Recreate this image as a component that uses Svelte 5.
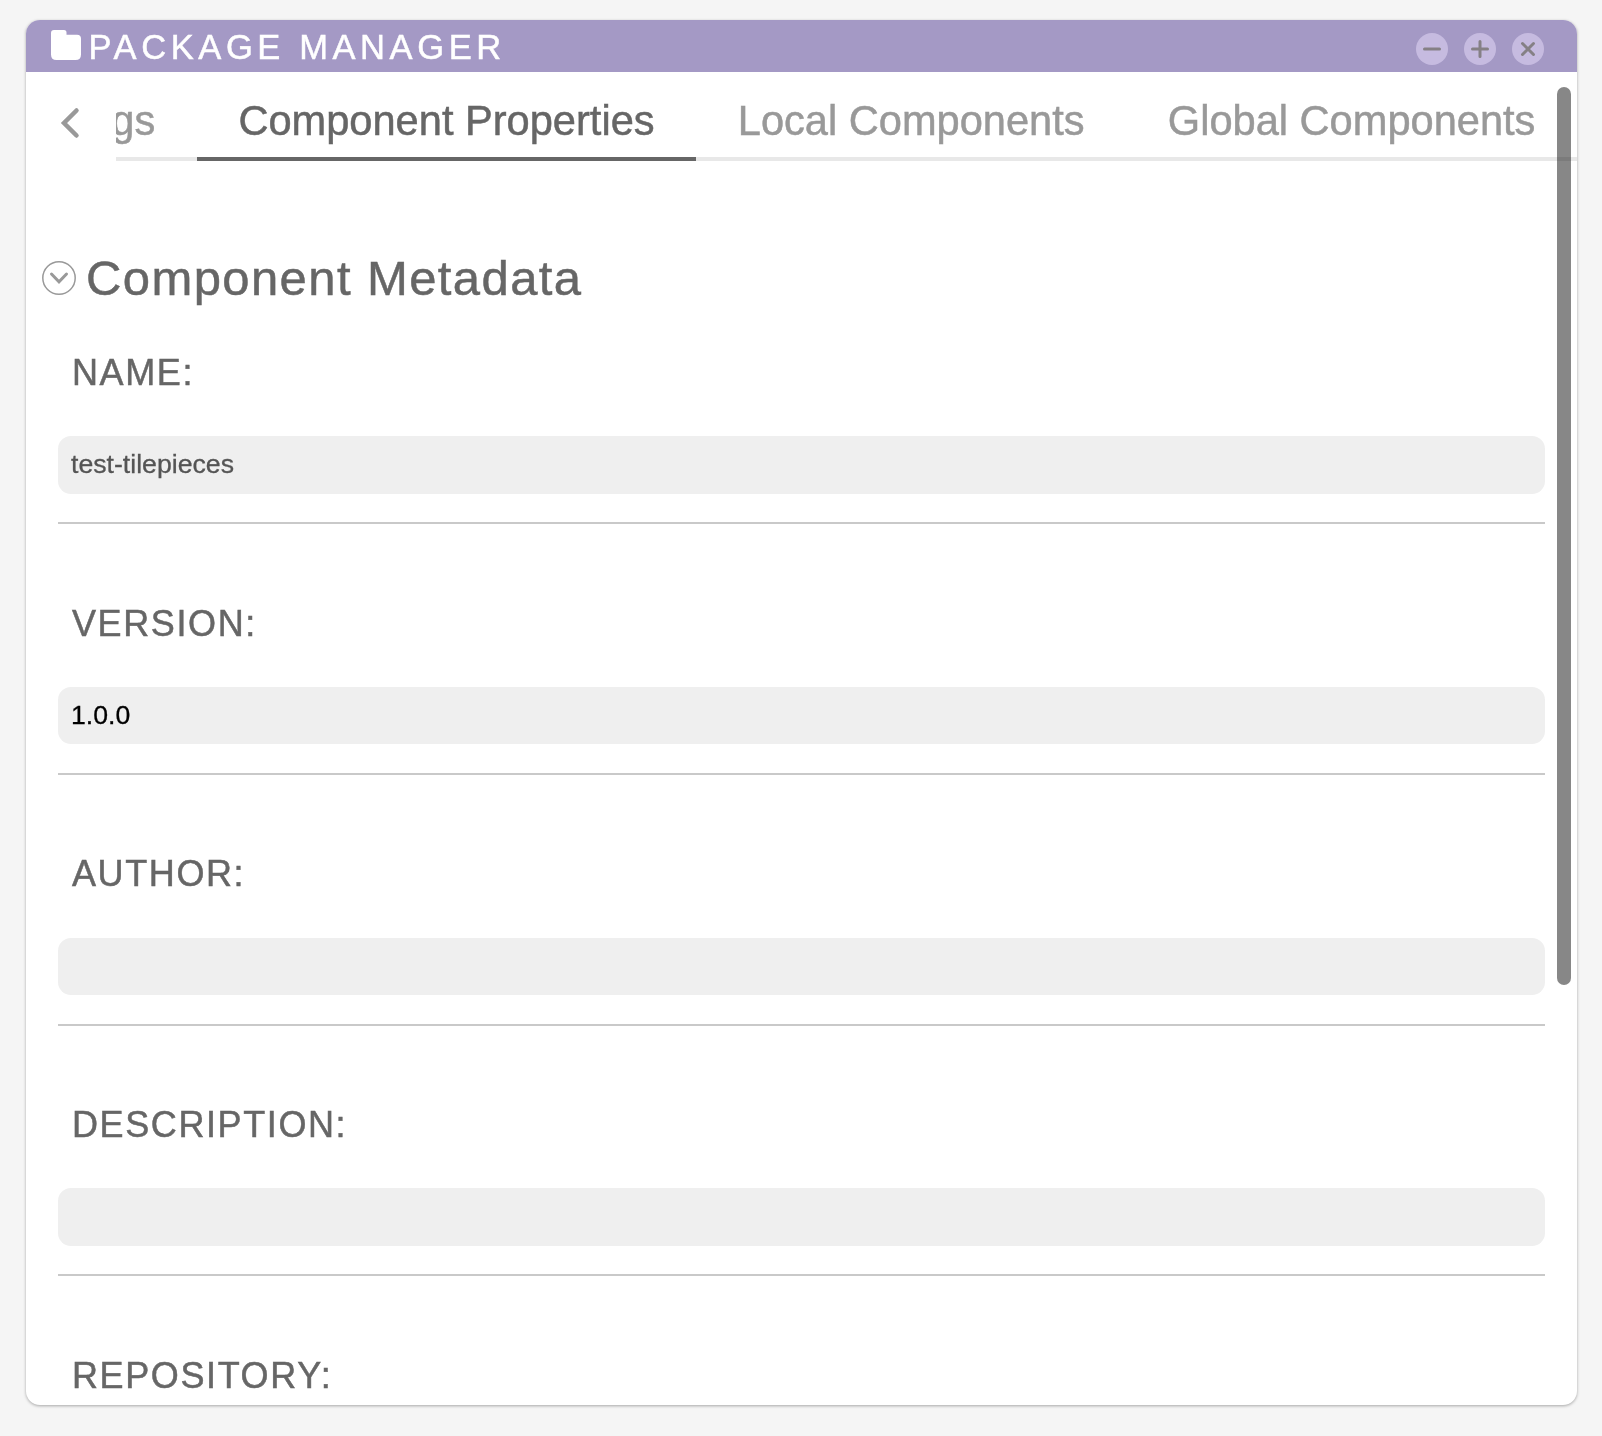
<script>
  const tabs = ['Settings', 'Component Properties', 'Local Components', 'Global Components'];
  const active = 'Component Properties';
  const fields = [
    { label: 'NAME:', value: 'test-tilepieces', muted: true },
    { label: 'VERSION:', value: '1.0.0' },
    { label: 'AUTHOR:', value: '' },
    { label: 'DESCRIPTION:', value: '' },
    { label: 'REPOSITORY:', value: '' }
  ];
</script>

<div class="desk">
  <section class="window">
    <header>
      <svg class="folder" width="30" height="30" viewBox="0 0 30 30">
        <path fill="#fff" d="M3 0h10q2.500 0 2.500 2.500V4.700H26q4 0 4 4v15.800q0 5.500-5.500 5.500h-19Q0 30 0 24.500V3q0-3 3-3z" />
      </svg>
      <h1>PACKAGE MANAGER</h1>
      <div class="controls">
        <svg viewBox="0 0 32 32"><circle cx="16" cy="16" r="16" /><path d="M8.500 16h15" /></svg>
        <svg viewBox="0 0 32 32"><circle cx="16" cy="16" r="16" /><path d="M8.500 16h15M16 8.500v15" /></svg>
        <svg viewBox="0 0 32 32"><circle cx="16" cy="16" r="16" /><path d="M10.500 10.500l11 11M21.500 10.500l-11 11" /></svg>
      </div>
    </header>

    <nav>
      <svg class="back" width="20" height="32" viewBox="0 0 20 32">
        <path d="M16.500 3.500L4 16l12.500 12.500" />
      </svg>
      <div class="tabs">
        {#each tabs as tab}
          <span class="tab" class:active={tab === active}>{tab}</span>
        {/each}
      </div>
    </nav>

    <main>
      <div class="heading">
        <svg width="34" height="34" viewBox="0 0 34 34">
          <circle cx="17" cy="17" r="16.200" />
          <path d="M9.500 13l7.500 7.800 7.500-7.800" />
        </svg>
        <h2>Component Metadata</h2>
      </div>
      {#each fields as field}
        <div class="field">
          <div class="label">{field.label}</div>
          <div class="input" class:muted={field.muted}>{field.value}</div>
        </div>
      {/each}
    </main>
    <div class="scrollbar"></div>
  </section>
</div>

<style>
  :global(body) {
    background: #f5f5f5;
    overflow: hidden;
  }
  .desk {
    box-sizing: border-box;
    height: 1436px;
    padding: 20px 25px 31.500px 26px;
    font-family: 'Liberation Sans', Arial, sans-serif;
    color: #666;
    -webkit-text-stroke: 0.500px currentColor;
    filter: drop-shadow(0 1px 1.500px rgba(0, 0, 0, 0.320));
  }
  .window {
    position: relative;
    height: 100%;
    overflow: hidden;
    border-radius: 14px;
    background: #fff;
  }
  header {
    box-sizing: border-box;
    display: flex;
    height: 52px;
    padding: 0 33px 0 25px;
    background: #a499c5;
  }
  .folder {
    margin-top: 10px;
  }
  h1 {
    flex: 1;
    margin: 0 0 0 7.500px;
    font-size: 34.500px;
    font-weight: 400;
    line-height: 54px;
    letter-spacing: 4.600px;
    white-space: nowrap;
    color: #fff;
  }
  .controls {
    display: flex;
    gap: 16px;
    margin-top: 13px;
  }
  .controls svg {
    width: 32px;
    height: 32px;
  }
  .controls circle {
    fill: #c6bbe0;
  }
  .controls path {
    fill: none;
    stroke: #858085;
    stroke-width: 3;
    stroke-linecap: round;
  }
  nav {
    display: flex;
    height: 89px;
  }
  .back {
    flex: none;
    margin: 35px 36px 0 34px;
  }
  .back path {
    fill: none;
    stroke: #999;
    stroke-width: 4.500;
    stroke-linecap: round;
  }
  .tabs {
    display: flex;
    flex: 1;
    justify-content: flex-end;
    overflow: hidden;
  }
  .tab {
    box-sizing: border-box;
    flex: none;
    height: 89px;
    padding: 0 41.600px;
    border-bottom: 4px solid #e8e8e8;
    font-size: 41.600px;
    line-height: 98px;
    color: #999;
  }
  .tab.active {
    border-color: #666;
    color: #666;
  }
  main {
    padding: 89px 32px 0;
  }
  .heading {
    display: flex;
    align-items: center;
    height: 56px;
    margin-left: -16px;
    gap: 10px;
  }
  .heading svg {
    fill: none;
    stroke: #999;
    stroke-width: 1.500;
  }
  .heading svg path {
    stroke-width: 3;
    stroke-linecap: round;
  }
  h2 {
    margin: 0;
    font-size: 49px;
    font-weight: 400;
    line-height: 56px;
    letter-spacing: 1.400px;
    white-space: nowrap;
  }
  .field {
    box-sizing: border-box;
    height: 250.600px;
    padding-top: 99.400px;
    border-bottom: 2px solid #c9c9c9;
  }
  .heading + .field {
    height: 218.400px;
    padding-top: 67.200px;
  }
  .label {
    height: 63.200px;
    padding-left: 14px;
    font-size: 36px;
    line-height: 0;
    letter-spacing: 1.600px;
  }
  .input {
    box-sizing: border-box;
    height: 57.400px;
    padding: 0 13px;
    border-radius: 13px;
    background: #efefef;
    font-size: 26.667px;
    line-height: 56px;
    color: #000;
    -webkit-text-stroke-width: 0.300px;
  }
  .input.muted {
    color: #555;
  }
  .scrollbar {
    position: absolute;
    top: 67px;
    right: 6px;
    width: 14px;
    height: 898px;
    border-radius: 7px;
    background: rgba(0, 0, 0, 0.470);
  }
</style>
